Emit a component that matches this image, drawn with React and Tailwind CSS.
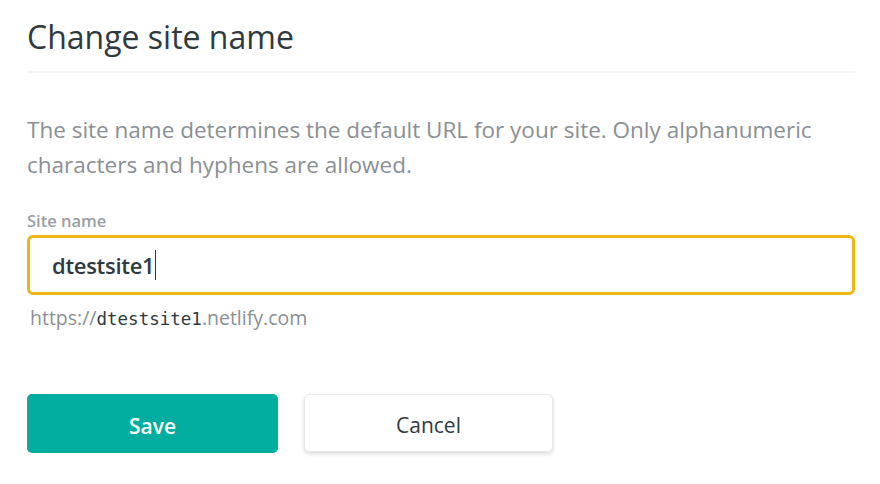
export default function App() {
    return (
        <div
            className="w-[880px] h-[484px] bg-white px-[27px] pt-[16px]"
            style={{ fontFamily: '"Open Sans", "Noto Sans", sans-serif' }}
        >
            <h1 className="text-[32px] leading-[42px] text-[#2e3a40]">
                Change site name
            </h1>
            <div className="mt-[13px] h-[2px] w-[828px] bg-[#f4f4f4]" />
            <p className="mt-[39px] text-[22.5px] leading-[35px] text-[#8a8f94]">
                The site name determines the default URL for your site. Only
                alphanumeric characters and hyphens are allowed.
            </p>
            <label className="mt-[29px] block text-[16.5px] leading-[20px] font-semibold text-[#9a9ea2]">
                Site name
            </label>
            <div className="mt-[4px] flex h-[60px] w-[828px] items-center rounded-[6px] border-[3px] border-[#eeb614] px-[22px]">
                <span className="text-[22px] font-semibold text-[#2e3a40] tracking-[-0.3px]">
                    dtestsite1
                </span>
                <span className="ml-[1px] h-[30px] w-[1px] bg-[#2e3a40]" />
            </div>
            <p className="mt-[10px] pl-[3px] text-[19.5px] leading-[26px] text-[#8a8f94]">
                https://
                <span
                    className="text-[#2e3a40] text-[17.5px]"
                    style={{ fontFamily: '"DejaVu Sans Mono", monospace' }}
                >
                    dtestsite1
                </span>
                .netlify.com
            </p>
            <div className="mt-[62px] flex gap-[26px]">
                <button className="h-[59px] w-[251px] rounded-[5px] bg-[#00ad9f] pt-[6px] text-[21px] font-semibold text-white">
                    Save
                </button>
                <button className="h-[58px] w-[249px] rounded-[5px] border border-[#e6e8ea] bg-white pt-[6px] text-[21px] font-medium text-[#2e3a40] shadow-[0_2px_4px_rgba(0,0,0,0.15)]">
                    Cancel
                </button>
            </div>
        </div>
    );
}
